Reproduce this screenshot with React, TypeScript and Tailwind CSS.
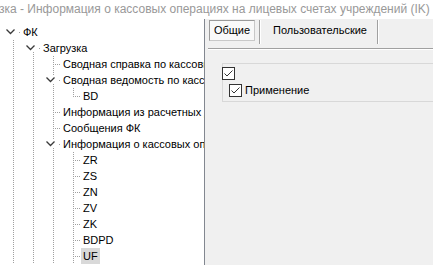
import React from "react";

type Row = {
  label: string;
  level: number;
  open?: boolean;
  first?: boolean;
  next: boolean;
  selected?: boolean;
};

const rows: Row[] = [
  { label: "ФК", level: 0, open: true, first: true, next: true },
  { label: "Загрузка", level: 1, open: true, first: true, next: true },
  { label: "Сводная справка по кассовым операциям", level: 2, next: true },
  { label: "Сводная ведомость по кассовым поступлениям", level: 2, open: true, next: true },
  { label: "BD", level: 3, next: false },
  { label: "Информация из расчетных документов", level: 2, next: true },
  { label: "Сообщения ФК", level: 2, next: true },
  { label: "Информация о кассовых операциях", level: 2, open: true, next: true },
  { label: "ZR", level: 3, next: true },
  { label: "ZS", level: 3, next: true },
  { label: "ZN", level: 3, next: true },
  { label: "ZV", level: 3, next: true },
  { label: "ZK", level: 3, next: true },
  { label: "BDPD", level: 3, next: true },
  { label: "UF", level: 3, next: true, selected: true },
];

const LINE = "#a0a0a0";

function Guide() {
  return (
    <svg width="20" height="16" className="block shrink-0">
      <line x1="13.5" y1="0" x2="13.5" y2="16" stroke={LINE} strokeDasharray="1 1" />
    </svg>
  );
}

function Connector({ row }: { row: Row }) {
  if (row.open) {
    return (
      <svg width="20" height="16" className="block shrink-0">
        {!row.first && (
          <line x1="13.5" y1="0" x2="13.5" y2="4" stroke={LINE} strokeDasharray="1 1" />
        )}
        {row.next && row.level > 0 && (
          <line x1="13.5" y1="12" x2="13.5" y2="16" stroke={LINE} strokeDasharray="1 1" />
        )}
        <polyline points="6.5,5.5 10.5,9.5 14.5,5.5" fill="none" stroke="#3a3a3a" strokeWidth="1.3" />
        <rect x="19" y="8" width="1" height="1" fill={LINE} />
      </svg>
    );
  }
  return (
    <svg width="20" height="16" className="block shrink-0">
      <line x1="13.5" y1="0" x2="13.5" y2={row.next ? 16 : 9} stroke={LINE} strokeDasharray="1 1" />
      <line x1="15" y1="8.5" x2="20" y2="8.5" stroke={LINE} strokeDasharray="1 1" />
    </svg>
  );
}

function Check({ className = "" }: { className?: string }) {
  return (
    <span className={`flex h-[13px] w-[13px] shrink-0 items-center justify-center border border-[#333] bg-white ${className}`}>
      <svg width="11" height="11" viewBox="0 0 11 11">
        <polyline points="1.5,5.5 4,8 9.5,2.5" fill="none" stroke="#333" strokeWidth="1" />
      </svg>
    </span>
  );
}

export default function App() {
  return (
    <div className="h-[265px] w-[433px] overflow-hidden bg-white font-['Liberation_Sans',Arial,sans-serif] text-black">
      {/* title bar */}
      <div className="-ml-[1px] h-[19px] whitespace-nowrap text-[12px] leading-[19px] text-[#999]">
        зка - Информация о кассовых операциях на лицевых счетах учреждений (IK) - Загрузка
      </div>

      <div className="flex h-[246px]">
        {/* tree */}
        <div className="w-[205px] shrink-0 overflow-hidden border-r border-[#828790] bg-white pt-[5px]">
          {rows.map((row, i) => (
            <div key={i} className="flex h-[16px] items-center">
              {row.level > 0 &&
                Array.from({ length: row.level }).map((_, j) => <Guide key={j} />)}
              <Connector row={row} />
              <span
                className={`ml-[1px] whitespace-nowrap px-[2px] text-[11px] leading-[16px] ${
                  row.selected ? "bg-[#d9d9d9]" : ""
                }`}
              >
                {row.label}
              </span>
            </div>
          ))}
        </div>

        {/* properties */}
        <div className="flex flex-1 flex-col bg-[#f0f0f0]">
          <div className="flex h-[29px] items-start pt-[1px]">
            <div className="ml-[4px] flex h-[21px] w-[46px] items-center justify-center border border-t-[#9a9a9a] border-l-[#9a9a9a] border-r-[#c8c8c8] border-b-[#c8c8c8] bg-[#f9f9f9] text-[11px]">
              Общие
            </div>
            <div className="ml-[4px] h-[24px] w-[2px] border-l border-[#a0a0a0] bg-white" />
            <div className="flex h-[21px] w-[116px] items-center pl-[12px] text-[11px]">
              Пользовательские
            </div>
            <div className="h-[24px] w-[2px] border-l border-[#a0a0a0] bg-white" />
          </div>

          <div className="ml-[3px] h-[2px] border-t border-[#a0a0a0] bg-white" />

          <div className="ml-[17px] mt-[13px] flex h-[39px] flex-col border-y border-l border-[#d8d8d8]">
            <Check className="-ml-[1px] mt-[3px]" />
            <div className="ml-[6px] mt-[4px] flex items-center gap-[3px]">
              <Check />
              <span className="text-[11px] leading-[13px]">Применение</span>
            </div>
          </div>
        </div>
      </div>
    </div>
  );
}
